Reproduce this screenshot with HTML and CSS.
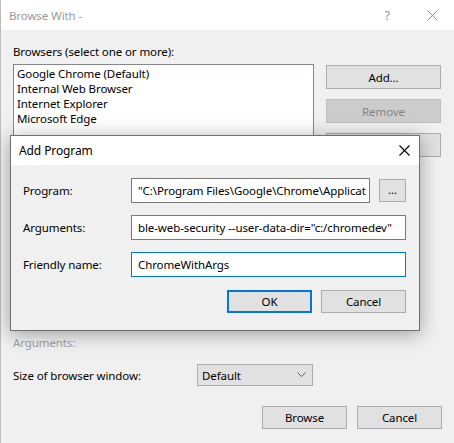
FILE: index.html
```html
<!DOCTYPE html>
<html>
<head>
<meta charset="utf-8">
<link rel="stylesheet" href="styles.css">
</head>
<body>
<div class="window">
  <div class="titlebar">
    <span class="title">Browse With -</span>
    <span class="help">?</span>
    <svg class="close-icon" width="11" height="11" viewBox="0 0 11 11"><path d="M0.5 0.5 L10.5 10.5 M10.5 0.5 L0.5 10.5" stroke="#8c8c8c" stroke-width="1" fill="none"/></svg>
  </div>
  <div class="content">
    <div class="section-label">Browsers (select one or more):</div>
    <div class="browsers-row">
      <div class="listbox">
        <div class="item">Google Chrome (Default)</div>
        <div class="item">Internal Web Browser</div>
        <div class="item">Internet Explorer</div>
        <div class="item">Microsoft Edge</div>
      </div>
      <div class="side-buttons">
        <div class="btn">Add...</div>
        <div class="btn disabled">Remove</div>
        <div class="btn">Edit...</div>
      </div>
    </div>
    <div class="disabled-label">Arguments:</div>
    <div class="size-row">
      <span class="size-label">Size of browser window:</span>
      <div class="combo"><span>Default</span>
        <svg width="9" height="6" viewBox="0 0 9 6"><path d="M0.5 0.5 L4.5 4.5 L8.5 0.5" stroke="#5a5a5a" stroke-width="1" fill="none"/></svg>
      </div>
    </div>
    <div class="footer">
      <div class="btn footer-btn">Browse</div>
      <div class="btn footer-btn">Cancel</div>
    </div>
  </div>

  <div class="dialog">
    <div class="dlg-titlebar">
      <span class="dlg-title">Add Program</span>
      <svg width="11" height="11" viewBox="0 0 11 11"><path d="M0.5 0.5 L10.5 10.5 M10.5 0.5 L0.5 10.5" stroke="#000" stroke-width="1.1" fill="none"/></svg>
    </div>
    <div class="dlg-body">
      <div class="form-row">
        <span class="form-label">Program:</span>
        <div class="text-box short"><span class="clip">"C:\Program Files\Google\Chrome\Applicat</span></div>
        <div class="btn dots">...</div>
      </div>
      <div class="form-row">
        <span class="form-label">Arguments:</span>
        <div class="text-box">ble-web-security --user-data-dir="c:/chromedev"</div>
      </div>
      <div class="form-row">
        <span class="form-label">Friendly name:</span>
        <div class="text-box focused">ChromeWithArgs</div>
      </div>
      <div class="dlg-buttons">
        <div class="btn dlg-btn default">OK</div>
        <div class="btn dlg-btn">Cancel</div>
      </div>
    </div>
  </div>
</div>
</body>
</html>
```

FILE: styles.css
```css
* { box-sizing: border-box; }
html, body {
  margin: 0;
  padding: 0;
  width: 454px;
  height: 443px;
  overflow: hidden;
  background: #f0f0f0;
}
body {
  font-family: "Noto Sans", "Liberation Sans", sans-serif;
  font-size: 11.5px;
  letter-spacing: -0.1px;
  color: #000;
}
.window {
  position: relative;
  width: 454px;
  height: 443px;
  border-left: 1px solid #bcbcbc;
}
.titlebar {
  height: 30px;
  background: #fff;
  display: flex;
  align-items: center;
  padding-left: 8px;
}
.title {
  color: #999;
  flex: 1;
}
.help {
  color: #999;
  font-size: 13px;
  margin-right: 37px;
}
.close-icon {
  margin-right: 16px;
}
.content {
  padding: 14px 12px 0 12px;
}
.section-label {
  height: 20px;
  line-height: 16px;
}
.browsers-row {
  display: flex;
  gap: 12px;
  align-items: flex-start;
}
.listbox {
  width: 301px;
  height: 250px;
  background: #fff;
  border: 1px solid #828790;
  padding: 1px 3px;
}
.item {
  height: 15px;
  line-height: 15px;
}
.side-buttons {
  display: flex;
  flex-direction: column;
  gap: 10px;
  padding-top: 1px;
  width: 115px;
}
.btn {
  background: #e1e1e1;
  border: 1px solid #adadad;
  height: 24px;
  display: flex;
  align-items: center;
  justify-content: center;
}
.btn.disabled {
  background: #cccccc;
  border-color: #bfbfbf;
  color: #838383;
}
.disabled-label {
  color: #a0a0a0;
  margin-top: 21px;
  line-height: 16px;
}
.size-row {
  display: flex;
  align-items: center;
  margin-top: 13px;
  height: 22px;
}
.size-label {
  width: 184px;
}
.combo {
  width: 116px;
  height: 22px;
  background: #e1e1e1;
  border: 1px solid #adadad;
  display: flex;
  align-items: center;
  justify-content: space-between;
  padding: 0 6px 0 4px;
}
.footer {
  display: flex;
  justify-content: flex-end;
  gap: 10px;
  margin-top: 20px;
}
.footer-btn {
  width: 85px;
  height: 23px;
}
.dialog {
  position: absolute;
  left: 9px;
  top: 135px;
  width: 410px;
  height: 196px;
  background: #f0f0f0;
  border: 1px solid #6f6f6f;
  box-shadow: 0 3px 18px rgba(0, 0, 0, 0.35);
}
.dlg-titlebar {
  height: 29px;
  background: #fff;
  display: flex;
  align-items: center;
  justify-content: space-between;
  padding: 0 9px 0 8px;
}
.dlg-title {
  font-size: 12px;
}
.dlg-body {
  padding: 13px 13px 0 12px;
  display: flex;
  flex-direction: column;
  gap: 12px;
}
.form-row {
  display: flex;
  align-items: center;
  height: 25px;
}
.form-label {
  width: 108px;
}
.text-box {
  flex: 1;
  height: 25px;
  background: #fff;
  border: 1px solid #7a7a7a;
  padding: 0 6px;
  line-height: 23px;
  white-space: nowrap;
  overflow: hidden;
}
.text-box.short {
  flex: none;
  width: 239px;
  padding-right: 0;
}
.clip {
  display: block;
  overflow: hidden;
}
.text-box.focused {
  border-color: #0078d7;
}
.dots {
  width: 27px;
  height: 23px;
  margin-left: 9px;
  padding-bottom: 3px;
}
.dlg-buttons {
  display: flex;
  justify-content: flex-end;
  gap: 9px;
  margin-top: 1px;
}
.dlg-btn {
  width: 85px;
  height: 23px;
}
.dlg-btn.default {
  border: 2px solid #0078d7;
}
```
